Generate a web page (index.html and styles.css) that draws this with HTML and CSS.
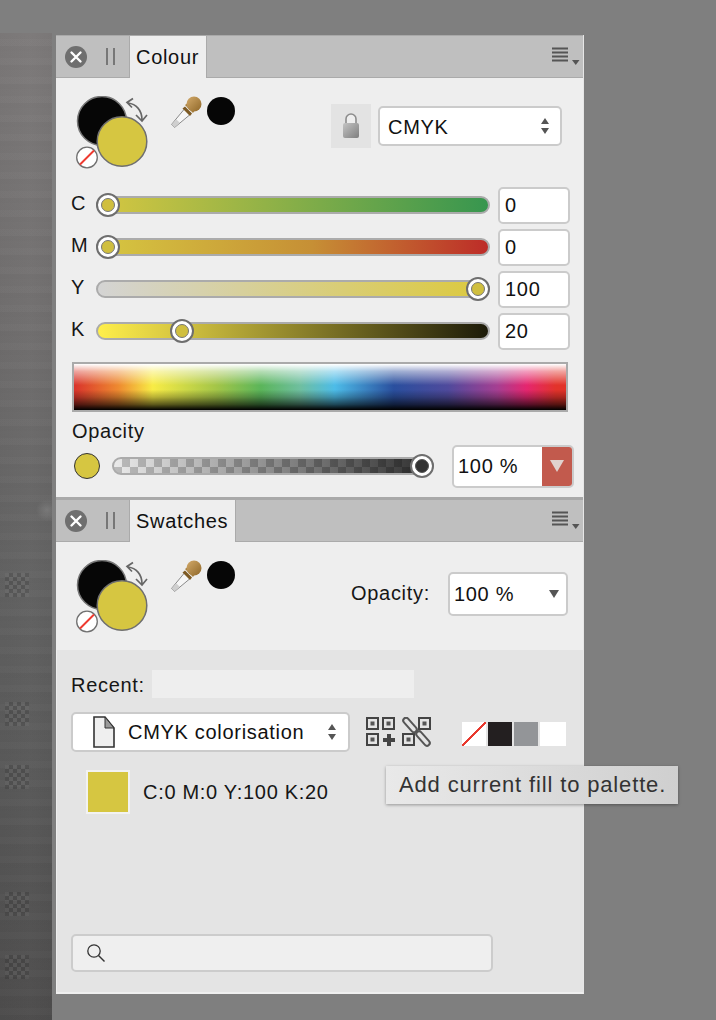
FILE: index.html
```html
<!DOCTYPE html>
<html lang="en">
<head>
<meta charset="utf-8">
<title>Colour and Swatches</title>
<link rel="stylesheet" href="styles.css">
</head>
<body>
<svg class="defs" width="0" height="0" aria-hidden="true">
  <defs>
    <linearGradient id="lockbody" x1="0" x2="1" y1="0" y2="1"><stop offset="0" stop-color="#c4c4c4"/><stop offset="1" stop-color="#7e7e7e"/></linearGradient>
    <linearGradient id="bulb" x1="0" x2="1" y1="0" y2="1"><stop offset="0" stop-color="#d3aa6a"/><stop offset="1" stop-color="#8f6728"/></linearGradient>
    <g id="close"><circle cx="11" cy="11" r="11" fill="#6f6f6f"/><path d="M6.500 6.500l9 9M15.500 6.500l-9 9" stroke="#fff" stroke-width="2.400" stroke-linecap="round"/></g>
    <g id="menu"><path d="M0 1.500h16M0 5.500h16M0 9.500h16M0 13.500h16" stroke="#555" stroke-width="1.800"/><path d="M20 13h7.500l-3.750 5z" fill="#555"/></g>
    <g id="wells">
      <circle cx="26" cy="25" r="24.500" fill="#060606" stroke="#777" stroke-width="1.500"/>
      <circle cx="46" cy="45.500" r="24.800" fill="#d6c641" stroke="#6f6f6f" stroke-width="1.500"/>
      <circle cx="11" cy="61.500" r="10.300" fill="#fff" stroke="#707070" stroke-width="1.300"/>
      <path d="M4 68.500l14-14" stroke="#ee3a30" stroke-width="2"/>
      <path d="M52 7c8 1 14 7 14 17M57 2.500l-6 4 5 5M60 19l6 6 5-6" fill="none" stroke="#666" stroke-width="1.700"/>
    </g>
    <g id="dropper">
      <path d="M14.300 13.100l5.400 5.800L4.500 31.500 1.500 28.500z" fill="#f6f6f6" stroke="#8a8a8a" stroke-width="1"/>
      <path d="M1.500 28.500l5-5 3 3-5 5z" fill="#cfcfcf"/>
      <path d="M12.500 12.500l2.500-2 7 7-2 2.500z" fill="#7d5a24"/>
      <path d="M15 9l3-2 7 7-2 3z" fill="#a57c39"/>
      <circle cx="24" cy="8" r="7.500" fill="url(#bulb)"/>
    </g>
    <g id="updown"><path d="M1 6l4-6 4 6zM1 10h8l-4 6z" fill="#555"/></g>
    <g id="qr"><path d="M1 1h11v11H1z" fill="none" stroke="#444" stroke-width="2"/><path d="M4.500 4.500h4v4h-4z" fill="#555"/></g>
  </defs>
</svg>
<div class="page">
  <div class="strip">
    <i class="check check-a"></i><i class="check check-b"></i><i class="check check-c"></i><i class="check check-d"></i><i class="check check-e"></i>
  </div>
  <main class="panel">
    <section class="colour">
      <header class="head">
        <svg class="close" width="22" height="22"><use href="#close"/></svg>
        <span class="grip"></span>
        <span class="tab">Colour</span>
        <svg class="menu" width="28" height="19"><use href="#menu"/></svg>
      </header>
      <div class="colour-body">
        <div class="top-row">
          <svg class="wells" width="73" height="74"><use href="#wells"/></svg>
          <svg class="dropper" width="34" height="33"><use href="#dropper"/></svg>
          <span class="dot"></span>
          <span class="lock">
            <svg width="18" height="26" viewBox="0 0 18 26"><path d="M4 12V6a5 5 0 0 1 10 0v6" fill="#eee" stroke="#8c8c8c" stroke-width="1.600"/><rect x="1" y="10" width="16" height="15" rx="2" fill="url(#lockbody)"/></svg>
          </span>
          <span class="field model"><span class="model-name">CMYK</span><svg width="10" height="16"><use href="#updown"/></svg></span>
        </div>
        <div class="sliders">
          <div class="slider"><span class="letter">C</span><div class="track track-c"><span class="thumb" style="--v:0"></span></div><span class="field num">0</span></div>
          <div class="slider"><span class="letter">M</span><div class="track track-m"><span class="thumb" style="--v:0"></span></div><span class="field num">0</span></div>
          <div class="slider"><span class="letter">Y</span><div class="track track-y"><span class="thumb" style="--v:1"></span></div><span class="field num">100</span></div>
          <div class="slider"><span class="letter">K</span><div class="track track-k"><span class="thumb" style="--v:0.2"></span></div><span class="field num">20</span></div>
        </div>
        <div class="spectrum"></div>
        <div class="opacity-label">Opacity</div>
        <div class="opacity-row">
          <span class="mini"></span>
          <div class="track track-o"><span class="thumb thumb-dark" style="--v:1"></span></div>
          <span class="field pct"><span class="pct-text">100 %</span><span class="pct-btn"><svg width="14" height="12"><path d="M0 0h14L7 12z" fill="#e0d2ce"/></svg></span></span>
        </div>
      </div>
    </section>
    <section class="swatches">
      <header class="head">
        <svg class="close" width="22" height="22"><use href="#close"/></svg>
        <span class="grip"></span>
        <span class="tab">Swatches</span>
        <svg class="menu" width="28" height="19"><use href="#menu"/></svg>
      </header>
      <div class="swatch-top">
        <svg class="wells" width="73" height="74"><use href="#wells"/></svg>
        <svg class="dropper" width="34" height="33"><use href="#dropper"/></svg>
        <span class="dot"></span>
        <span class="op-label">Opacity:</span>
        <span class="field op-select">100 %<svg width="10" height="8"><path d="M0 0h10L5 8z" fill="#555"/></svg></span>
      </div>
      <div class="swatch-lower">
        <div class="recent"><span class="recent-label">Recent:</span><span class="recent-box"></span></div>
        <div class="palette-row">
          <span class="field palette">
            <svg class="file" width="22" height="32" viewBox="0 0 22 32"><path d="M1 1h11l9 11v19H1z" fill="#efefef" stroke="#333" stroke-width="1.600"/><path d="M12 1l9 11h-9z" fill="#999" stroke="#333" stroke-width="1"/></svg>
            <span class="palette-name">CMYK colorisation</span>
            <svg width="10" height="16"><use href="#updown"/></svg>
          </span>
          <svg class="tool" width="30" height="30" viewBox="0 0 30 30">
            <use href="#qr"/><use href="#qr" x="16"/><use href="#qr" y="16"/>
            <path d="M17 23h12M23 17v12" stroke="#444" stroke-width="4"/>
          </svg>
          <svg class="tool tool-link" width="30" height="30" viewBox="0 0 30 30">
            <use href="#qr" x="16"/><use href="#qr" y="16"/>
            <path d="M4 3.500l8 9M17 17l8 9" stroke="#555" stroke-width="7.500" stroke-linecap="round"/>
            <path d="M4 3.500l8 9M17 17l8 9" stroke="#e4e4e4" stroke-width="3.500" stroke-linecap="round"/>
          </svg>
          <div class="chips">
            <span class="chip chip-none"></span><span class="chip chip-black"></span><span class="chip chip-grey"></span><span class="chip chip-white"></span>
          </div>
        </div>
        <div class="item"><span class="item-swatch"></span><span>C:0 M:0 Y:100 K:20</span></div>
        <div class="search">
          <svg width="20" height="20" viewBox="0 0 20 20"><circle cx="8" cy="8" r="6.200" fill="none" stroke="#333" stroke-width="1.300"/><path d="M12.500 12.500l6 6" stroke="#333" stroke-width="1.400"/></svg>
        </div>
      </div>
    </section>
  </main>
</div>
<div class="tooltip">Add current fill to palette.</div>
</body>
</html>
```

FILE: styles.css
```css
* { box-sizing: border-box; }
html, body { margin: 0; height: 100%; }
body {
  position: relative;
  background: #7f7f7f;
  overflow: hidden;
  font-family: "Liberation Sans", Arial, sans-serif;
  font-size: 20px;
  letter-spacing: 0.7px;
  color: #161616;
}
.defs { position: absolute; }
.page { display: flex; align-items: flex-start; height: 1020px; }

.strip {
  position: relative;
  flex: none;
  width: 52px;
  height: 987px;
  margin-top: 33px;
  background:
    radial-gradient(circle at 47px 477px, rgba(255,255,255,.13) 0, rgba(255,255,255,0) 11px),
    repeating-linear-gradient(0deg, rgba(0,0,0,.018) 0 5px, rgba(255,255,255,.012) 5px 12px, rgba(0,0,0,.012) 12px 19px),
    linear-gradient(90deg, rgba(0,0,0,.015), rgba(255,255,255,.012) 60%, rgba(0,0,0,.015)),
    linear-gradient(#7d7a7a 0, #716f6f 30%, #636363 55%, #5a5a5a 75%, #4e4d4d 100%);
}
.check {
  position: absolute;
  left: 5px;
  width: 24px;
  height: 24px;
  background: repeating-conic-gradient(rgba(0,0,0,.13) 0 25%, rgba(255,255,255,.035) 0 50%) 0 0 / 8px 8px;
}
.check-a { top: 540px; }
.check-b { top: 669px; }
.check-c { top: 732px; }
.check-d { top: 859px; }
.check-e { top: 922px; }

.panel {
  flex: none;
  width: 528px;
  height: 959px;
  margin: 35px 0 0 4px;
  background: #eee;
  border-right: 1px solid #e6e6e6;
  border-bottom: 2px solid #efefef;
  display: flex;
  flex-direction: column;
}

.head {
  display: flex;
  align-items: center;
  height: 43px;
  background: #bfbfbf;
  border-top: 1px solid #a9a9a9;
  border-bottom: 1px solid #aaa;
  padding-left: 9px;
}
.close { flex: none; }
.grip {
  flex: none;
  width: 9px;
  height: 17px;
  margin-left: 19px;
  border-left: 2px solid #777;
  border-right: 2px solid #777;
}
.tab {
  flex: none;
  align-self: stretch;
  display: flex;
  align-items: center;
  margin: -1px 0 -1px 14px;
  padding: 0 7px 0 6px;
  background: #eee;
  border: 1px solid #aaa;
  border-bottom: 0;
  color: #111;
}
.menu { margin-left: auto; margin-right: 3px; flex: none; }

.colour-body { height: 419px; padding: 18px 0 0 20px; }
.top-row { display: flex; align-items: flex-start; height: 91px; }
.wells { flex: none; }
.dropper { flex: none; margin-left: 21px; }
.dot {
  flex: none;
  width: 28px;
  height: 28px;
  margin: 1px 0 0 3px;
  border-radius: 50%;
  background: #060606;
}
.lock {
  flex: none;
  width: 40px;
  height: 44px;
  margin: 8px 0 0 96px;
  background: #e3e3e3;
  display: flex;
  align-items: center;
  justify-content: center;
}
.field {
  display: flex;
  align-items: center;
  background: #fff;
  border: 2px solid #cbcbcb;
  border-radius: 5px;
  color: #111;
}
.model {
  width: 184px;
  height: 40px;
  margin: 10px 0 0 7px;
  padding: 0 10px 0 8px;
  justify-content: space-between;
}
.model-name { padding-top: 2px; }

.sliders { display: flex; flex-direction: column; gap: 6px; margin-left: -5px; width: 498px; }
.slider { display: flex; align-items: center; height: 36px; }
.letter { flex: none; width: 25px; margin-top: -3px; }
.track {
  position: relative;
  flex: none;
  width: 394px;
  height: 18px;
  border: 2px solid #ababab;
  border-radius: 9px;
}
.track-c { background: linear-gradient(90deg, #d6c741, #37964f); }
.track-m { background: linear-gradient(90deg, #d6c741, #c68f35 55%, #bd2c28); }
.track-y { background: linear-gradient(90deg, #d4d4d4, #dcc93c); }
.track-k { background: linear-gradient(90deg, #ffef4a, #d6c641 20%, #1c1a08); }
.thumb {
  position: absolute;
  top: 50%;
  left: calc(10px + (100% - 20px) * var(--v));
  width: 24px;
  height: 24px;
  margin: -12px 0 0 -12px;
  border: 2px solid #6e6e6e;
  border-radius: 50%;
  background: #fff;
  display: flex;
  align-items: center;
  justify-content: center;
}
.thumb::after {
  content: "";
  width: 12px;
  height: 12px;
  border-radius: 50%;
  background: #d0bf3f;
  border: 1.500px solid #777;
}
.thumb-dark::after { background: #333; border-color: #555; }
.num { flex: none; width: 72px; height: 37px; margin-left: 8px; padding-left: 5px; }

.spectrum {
  width: 496px;
  height: 50px;
  margin: 13px 0 0 -4px;
  border: 2px solid #aaa;
  background:
    linear-gradient(#fff 0, rgba(255,255,255,.55) 16%, rgba(255,255,255,0) 46%, rgba(0,0,0,0) 56%, rgba(0,0,0,.25) 72%, rgba(0,0,0,.62) 88%, #000 100%),
    linear-gradient(90deg, #d9332c 0, #ee8a30 9%, #f8ec46 16%, #a3c548 29%, #5bb55a 38%, #6fbfa0 46%, #4dbce8 53%, #2a4f9e 65%, #4f4a9c 76%, #a53f92 86%, #e5266f 92%, #e2332a 98%, #e2332a 100%);
}
.opacity-label { height: 24px; margin: 7px 0 0 -4px; line-height: 24px; }
.opacity-row { display: flex; align-items: center; height: 42px; margin: 2px 0 0 -2px; }
.mini {
  flex: none;
  width: 26px;
  height: 26px;
  border-radius: 50%;
  background: #d6c641;
  border: 1px solid #333;
}
.track-o {
  width: 322px;
  margin-left: 12px;
  background:
    repeating-conic-gradient(rgba(0,0,0,.2) 0 25%, rgba(0,0,0,0) 0 50%) 0 0 / 16px 16px,
    linear-gradient(90deg, #eaeaea, #2e2e2e);
}
.pct {
  flex: none;
  position: relative;
  width: 122px;
  height: 43px;
  margin-left: 18px;
  overflow: hidden;
}
.pct-text { padding-left: 4px; flex: 1; }
.pct-btn {
  flex: none;
  width: 30px;
  align-self: stretch;
  display: flex;
  align-items: center;
  justify-content: center;
  background: #c25a4d;
}

.swatches { flex: 1; display: flex; flex-direction: column; border-top: 2px solid #a9a9a9; }
.swatch-top { display: flex; align-items: flex-start; height: 108px; padding: 18px 0 0 20px; }
.op-label { flex: none; margin: 21px 0 0 116px; line-height: 24px; }
.op-select {
  flex: none;
  width: 120px;
  height: 44px;
  margin: 12px 0 0 18px;
  padding: 0 7px 0 4px;
  justify-content: space-between;
}
.swatch-lower { flex: 1; position: relative; margin-left: 1px; background: #e4e4e4; padding: 20px 0 0 14px; display: flex; flex-direction: column; }
.recent { display: flex; align-items: center; height: 28px; }
.recent-label { margin-top: 2px; }
.recent-box { width: 262px; height: 28px; margin-left: 7px; background: #eee; }
.palette-row { display: flex; align-items: center; margin-top: 14px; height: 40px; }
.palette { width: 279px; height: 40px; padding: 0 11px 0 20px; flex: none; }
.file { flex: none; }
.palette-name { flex: 1; margin-left: 13px; }
.tool { flex: none; margin-left: 16px; }
.tool-link { margin-left: 6px; }
.chips { display: flex; gap: 2px; margin: 4px 0 0 30px; }
.chip { width: 24px; height: 24px; }
.chip-none { background: linear-gradient(to top left, #fff 47%, #e8392e 47%, #e8392e 53%, #fff 53%); }
.chip-black { background: #231f20; }
.chip-grey { background: #939598; }
.chip-white { background: #fff; width: 26px; }
.item { display: flex; align-items: center; margin: 18px 0 0 15px; }
.item-swatch { width: 44px; height: 44px; margin-right: 13px; background: #d6c641; border: 2px solid #f2f2f2; }
.search {
  width: 422px;
  height: 38px;
  margin: auto 0 20px 0;
  padding-left: 13px;
  display: flex;
  align-items: center;
  background: #efefef;
  border: 2px solid #ccc;
  border-radius: 5px;
}

.tooltip {
  position: absolute;
  left: 386px;
  top: 766px;
  width: 292px;
  height: 38px;
  padding-left: 13px;
  display: flex;
  align-items: center;
  font-size: 22px;
  letter-spacing: 0.85px;
  background: linear-gradient(90deg, #e9e9e9, #cfcfcf);
  color: #333;
  box-shadow: 0 1px 3px rgba(0,0,0,.35);
}
```
